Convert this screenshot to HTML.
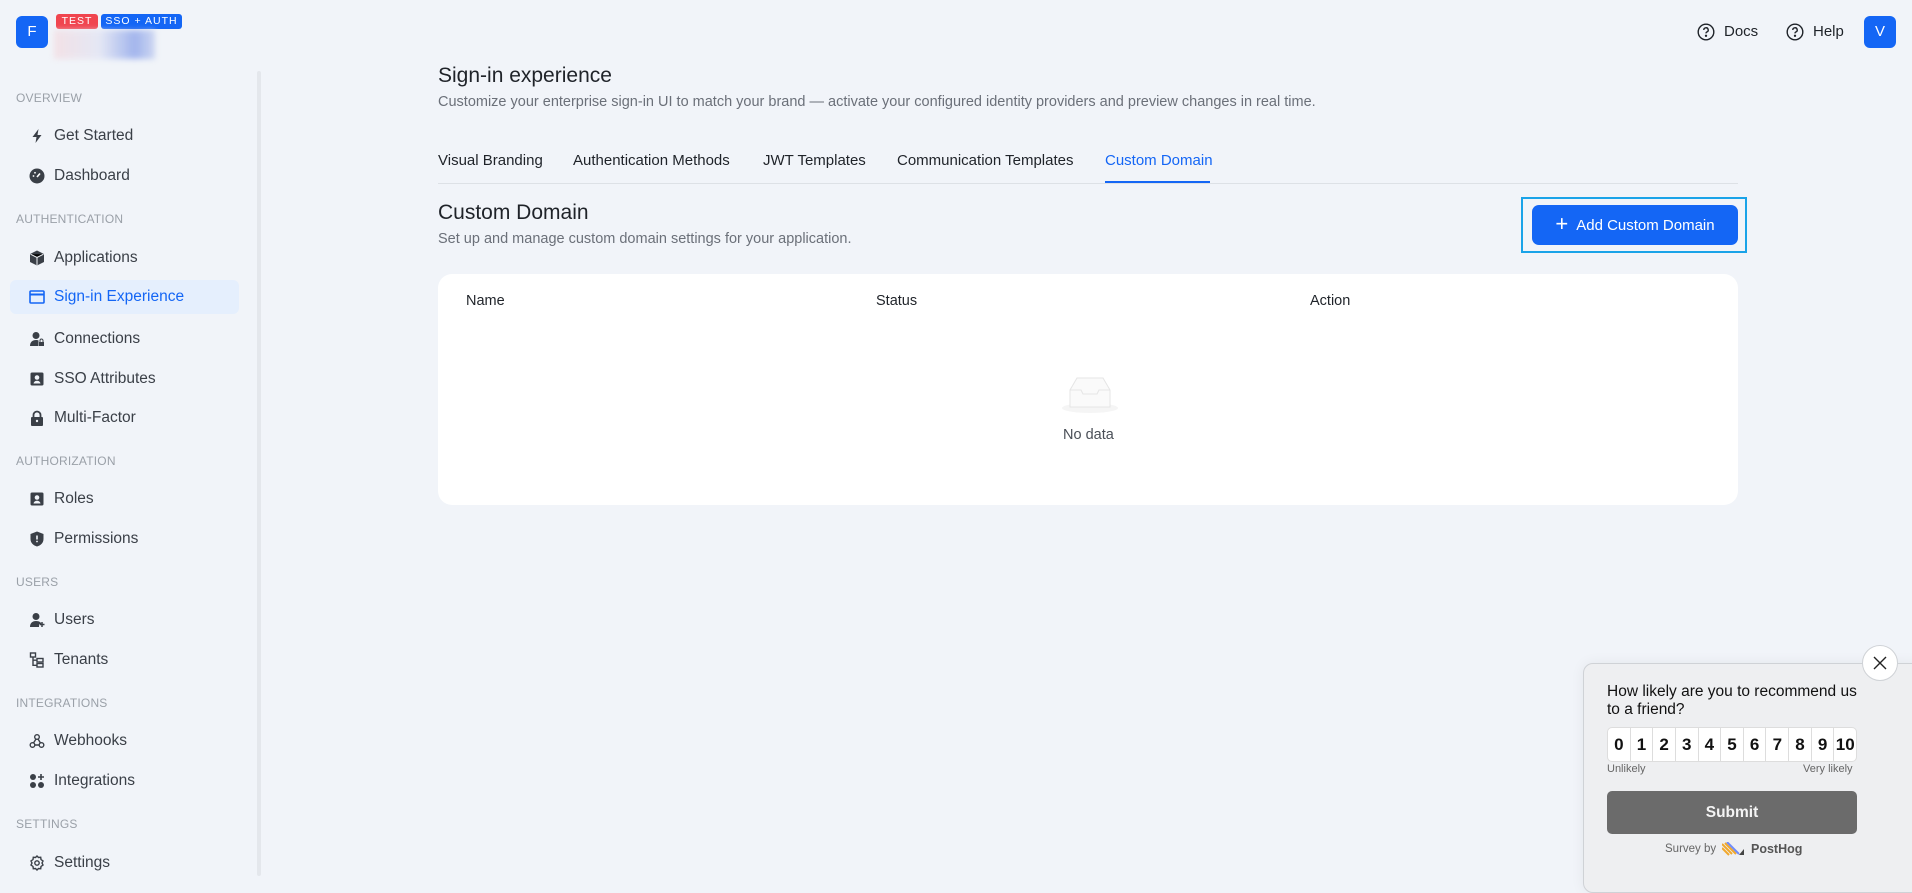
<!DOCTYPE html>
<html><head><meta charset="utf-8">
<style>
*{box-sizing:border-box;margin:0;padding:0}
body{width:1912px;height:876px;overflow:hidden;background:#f1f4f9;font-family:"Liberation Sans",sans-serif;color:#1f2329;position:relative}
.a{position:absolute;white-space:nowrap}
.sec{position:absolute;left:16px;font-size:12px;color:#9aa0a8;letter-spacing:.2px}
.it{position:absolute;left:10px;width:229px;height:34px;border-radius:6px;display:flex;align-items:center;font-size:15.5px;color:#3a3f47}
.it svg{position:absolute;left:19px;top:9px}
.it span{position:absolute;left:44px}
.tab{position:absolute;top:152px;font-size:15px;color:#1f2329}
.n{flex:1;border-right:1px solid #ddd;display:flex;align-items:center;justify-content:center;font-weight:bold;font-size:17px;color:#111}
</style></head><body>
<div class="a" style="left:16px;top:16px;width:32px;height:32px;background:#1466f5;border-radius:6px;color:#fff;font-size:15px;text-align:center;line-height:32px">F</div>
<div class="a" style="left:56px;top:14px;width:42px;height:15px;background:#f0454f;border-radius:3px;color:#fff;font-size:10.5px;letter-spacing:1px;text-align:center;line-height:15px">TEST</div>
<div class="a" style="left:101px;top:14px;width:81px;height:15px;background:#1466f5;border-radius:3px;color:#fff;font-size:10.5px;letter-spacing:1px;text-align:center;line-height:15px">SSO + AUTH</div>
<div class="a" style="left:54px;top:30px;width:101px;height:29px;background:linear-gradient(90deg,#f3dde2,#e2e5f4 45%,#8fa6ea 80%,#c5d0f0);filter:blur(3px);opacity:.8"></div>
<div class="a" style="left:257px;top:71px;width:4px;height:805px;background:#e4e7ec;border-radius:2px"></div>

<div class="sec" style="top:91px">OVERVIEW</div>
<div class="it" style="top:119px"><svg width="16" height="16" viewBox="0 0 16 16"><path d="M9.5 1 3.5 9h4l-1 6 6-8h-4z" fill="#3a3f47"/></svg><span>Get Started</span></div>
<div class="it" style="top:159px"><svg width="16" height="16" viewBox="0 0 16 16"><circle cx="8" cy="8" r="7.5" fill="#3a3f47"/><path d="M8 9 11 5.5" stroke="#fff" stroke-width="1.6"/><circle cx="4.5" cy="8" r=".9" fill="#fff"/><circle cx="6" cy="4.8" r=".9" fill="#fff"/></svg><span>Dashboard</span></div>
<div class="sec" style="top:212px">AUTHENTICATION</div>
<div class="it" style="top:241px"><svg width="16" height="16" viewBox="0 0 16 16"><path d="M8 .5 15 4v8l-7 3.5L1 12V4z" fill="#3a3f47"/><path d="M1.5 4.2 8 7.5l6.5-3.3M8 7.5v7.7" stroke="#f1f4f9" stroke-width="1"/></svg><span>Applications</span></div>
<div class="it" style="top:280px;background:#e5effd;color:#1466f5"><svg width="16" height="16" viewBox="0 0 16 16"><rect x="1" y="2" width="14" height="12" rx="1" fill="none" stroke="#1466f5" stroke-width="1.6"/><path d="M1 5.5h14" stroke="#1466f5" stroke-width="2"/></svg><span>Sign-in Experience</span></div>
<div class="it" style="top:322px"><svg width="16" height="16" viewBox="0 0 16 16"><circle cx="7" cy="4.5" r="3.5" fill="#3a3f47"/><path d="M1 15c0-4 2.5-6 6-6 1 0 2 .2 2.5.5V15z" fill="#3a3f47"/><rect x="10" y="11" width="5" height="4" fill="#3a3f47"/><path d="M11 11V9.5a1.5 1.5 0 0 1 3 0V11" stroke="#3a3f47" fill="none"/></svg><span>Connections</span></div>
<div class="it" style="top:362px"><svg width="16" height="16" viewBox="0 0 16 16"><rect x="1.5" y="1.5" width="13" height="13" rx="1.5" fill="#3a3f47"/><circle cx="8" cy="6.5" r="2.3" fill="#f1f4f9"/><path d="M4.5 12.5c.5-2 2-2.7 3.5-2.7s3 .7 3.5 2.7z" fill="#f1f4f9"/></svg><span>SSO Attributes</span></div>
<div class="it" style="top:401px"><svg width="16" height="16" viewBox="0 0 16 16"><rect x="2" y="7" width="12" height="9" rx="1" fill="#3a3f47"/><path d="M4.5 7V5a3.5 3.5 0 0 1 7 0v2" stroke="#3a3f47" stroke-width="1.8" fill="none"/><circle cx="8" cy="11" r="1.2" fill="#f1f4f9"/></svg><span>Multi-Factor</span></div>
<div class="sec" style="top:454px">AUTHORIZATION</div>
<div class="it" style="top:482px"><svg width="16" height="16" viewBox="0 0 16 16"><rect x="1.5" y="1.5" width="13" height="13" rx="1.5" fill="#3a3f47"/><circle cx="8" cy="6.5" r="2.3" fill="#f1f4f9"/><path d="M4.5 12.5c.5-2 2-2.7 3.5-2.7s3 .7 3.5 2.7z" fill="#f1f4f9"/></svg><span>Roles</span></div>
<div class="it" style="top:522px"><svg width="16" height="16" viewBox="0 0 16 16"><path d="M8 .5 14.5 3v5c0 4-3 6.5-6.5 7.5C4.5 14.5 1.5 12 1.5 8V3z" fill="#3a3f47"/><rect x="7.2" y="4.5" width="1.6" height="4" fill="#f1f4f9"/><circle cx="8" cy="10.5" r=".9" fill="#f1f4f9"/></svg><span>Permissions</span></div>
<div class="sec" style="top:575px">USERS</div>
<div class="it" style="top:603px"><svg width="16" height="16" viewBox="0 0 16 16"><circle cx="7" cy="4.5" r="3.5" fill="#3a3f47"/><path d="M1 15c0-4 2.5-6 6-6s5 1.5 5.5 3H10v3z" fill="#3a3f47"/><path d="M13 10v5M10.5 12.5h5" stroke="#3a3f47" stroke-width="1.5"/></svg><span>Users</span></div>
<div class="it" style="top:643px"><svg width="16" height="16" viewBox="0 0 16 16" fill="none" stroke="#3a3f47" stroke-width="1.4"><rect x="1.5" y="1" width="5" height="4"/><rect x="8" y="6.5" width="6" height="3.5"/><rect x="8" y="11.5" width="6" height="3.5"/><path d="M4 5v8.3h4M4 8.2h4"/></svg><span>Tenants</span></div>
<div class="sec" style="top:696px">INTEGRATIONS</div>
<div class="it" style="top:724px"><svg width="16" height="16" viewBox="0 0 16 16" fill="none" stroke="#3a3f47" stroke-width="1.4"><circle cx="8" cy="4" r="2.3"/><circle cx="3.5" cy="12" r="2.3"/><circle cx="12.5" cy="12" r="2.3"/><path d="M7 6 4.5 10M9 6l2.5 4M5.8 12h4.4"/></svg><span>Webhooks</span></div>
<div class="it" style="top:764px"><svg width="16" height="16" viewBox="0 0 16 16" fill="#3a3f47"><circle cx="4" cy="4" r="3"/><circle cx="4" cy="12" r="3"/><circle cx="12" cy="12" r="3"/><path d="M12 1v6M9 4h6" stroke="#3a3f47" stroke-width="1.6"/></svg><span>Integrations</span></div>
<div class="sec" style="top:817px">SETTINGS</div>
<div class="it" style="top:846px"><svg width="16" height="16" viewBox="0 0 16 16" fill="none" stroke="#3a3f47" stroke-width="1.4"><path d="M8 1 9.5 2.5 11.7 2.3 12 4.5 14 6l-1 2 1 2-2 1.5-.3 2.2-2.2-.2L8 15l-1.5-1.5-2.2.2L4 11.5 2 10l1-2-1-2 2-1.5.3-2.2 2.2.2z"/><circle cx="8" cy="8" r="2.2"/></svg><span>Settings</span></div>

<svg class="a" style="left:1697px;top:23px" width="18" height="18" viewBox="0 0 18 18" fill="none" stroke="#1f2329" stroke-width="1.4"><circle cx="9" cy="9" r="7.8"/><path d="M6.8 7a2.2 2.2 0 1 1 3 2c-.6.3-.8.7-.8 1.4"/><circle cx="9" cy="12.8" r=".5" fill="#1f2329"/></svg>
<div class="a" style="left:1724px;top:23px;font-size:15px">Docs</div>
<svg class="a" style="left:1786px;top:23px" width="18" height="18" viewBox="0 0 18 18" fill="none" stroke="#1f2329" stroke-width="1.4"><circle cx="9" cy="9" r="7.8"/><path d="M6.8 7a2.2 2.2 0 1 1 3 2c-.6.3-.8.7-.8 1.4"/><circle cx="9" cy="12.8" r=".5" fill="#1f2329"/></svg>
<div class="a" style="left:1813px;top:23px;font-size:15px">Help</div>
<div class="a" style="left:1864px;top:16px;width:32px;height:32px;background:#1466f5;border-radius:6px;color:#fff;font-size:15px;text-align:center;line-height:32px">V</div>

<div class="a" style="left:438px;top:64px;font-size:21px;color:#1f2329">Sign-in experience</div>
<div class="a" style="left:438px;top:94px;font-size:14.5px;color:#6b7079">Customize your enterprise sign-in UI to match your brand — activate your configured identity providers and preview changes in real time.</div>
<div class="tab" style="left:438px">Visual Branding</div>
<div class="tab" style="left:573px">Authentication Methods</div>
<div class="tab" style="left:763px">JWT Templates</div>
<div class="tab" style="left:897px">Communication Templates</div>
<div class="tab" style="left:1105px;color:#1466f5">Custom Domain</div>
<div class="a" style="left:438px;top:183px;width:1300px;height:1px;background:#dde1e6"></div>
<div class="a" style="left:1105px;top:181px;width:105px;height:2px;background:#1466f5"></div>

<div class="a" style="left:438px;top:201px;font-size:21px">Custom Domain</div>
<div class="a" style="left:438px;top:231px;font-size:14.5px;color:#6b7079">Set up and manage custom domain settings for your application.</div>
<div class="a" style="left:1521px;top:197px;width:226px;height:56px;border:2px solid #1aa3e8"></div>
<div class="a" style="left:1532px;top:205px;width:206px;height:40px;background:#1466f5;border-radius:7px;color:#fff;font-size:15px;display:flex;align-items:center;justify-content:center"><span style="font-size:22px;font-weight:300;margin-right:8px;margin-top:-3px">+</span>Add Custom Domain</div>

<div class="a" style="left:438px;top:274px;width:1300px;height:231px;background:#fff;border-radius:14px"></div>
<div class="a" style="left:466px;top:293px;font-size:14.5px">Name</div>
<div class="a" style="left:876px;top:293px;font-size:14.5px">Status</div>
<div class="a" style="left:1310px;top:293px;font-size:14.5px">Action</div>
<svg class="a" style="left:1060px;top:374px" width="60" height="40" viewBox="0 0 60 40"><ellipse cx="30" cy="34" rx="28" ry="5" fill="#f5f5f5"/><path d="M10 16 17 4h26l7 12v17H10z" fill="#fafafa" stroke="#e5e5e5"/><path d="M10 16h11l2 4h14l2-4h11" fill="none" stroke="#e5e5e5"/></svg>
<div class="a" style="left:1063px;top:427px;font-size:14.5px;color:#4a4f57">No data</div>

<div class="a" style="left:1583px;top:663px;width:340px;height:230px;background:#eeeff1;border:1px solid #cfd2d6;border-radius:10px;box-shadow:0 0 14px rgba(0,0,0,.06)"></div>
<div class="a" style="left:1862px;top:645px;width:36px;height:36px;border-radius:50%;background:#fff;border:1px solid #cfd2d6"></div>
<svg class="a" style="left:1872px;top:655px" width="16" height="16" viewBox="0 0 16 16" stroke="#222" stroke-width="1.4"><path d="M2 2l12 12M14 2 2 14"/></svg>
<div class="a" style="left:1607px;top:683px;font-size:15.5px;line-height:18px;color:#111;white-space:normal;width:250px">How likely are you to recommend us to a friend?</div>
<div class="a" style="left:1607px;top:727px;width:250px;height:35px;background:#fff;border:1px solid #ddd;border-radius:5px;display:flex;overflow:hidden">
<div class="n">0</div><div class="n">1</div><div class="n">2</div><div class="n">3</div><div class="n">4</div><div class="n">5</div><div class="n">6</div><div class="n">7</div><div class="n">8</div><div class="n">9</div><div class="n" style="border:0">10</div></div>
<div class="a" style="left:1607px;top:763px;font-size:11px;color:#666">Unlikely</div>
<div class="a" style="left:1803px;top:763px;font-size:11px;color:#666">Very likely</div>
<div class="a" style="left:1607px;top:791px;width:250px;height:43px;background:#6b6b6b;border-radius:5px;color:#f4f4f4;font-weight:bold;font-size:15.5px;text-align:center;line-height:43px">Submit</div>
<div class="a" style="left:1665px;top:843px;font-size:11.5px;color:#666">Survey by</div>
<svg class="a" style="left:1722px;top:842px" width="26" height="14" viewBox="0 0 26 14"><path d="M0 2l10 10M0 6l7 7M3 1l11 11" stroke="#f1a82c" stroke-width="2"/><path d="M5 0l12 12" stroke="#1d4aff" stroke-width="2" opacity=".6"/><path d="M17 13l5-6v6z" fill="#444"/></svg>
<div class="a" style="left:1751px;top:842px;font-size:12.5px;font-weight:bold;color:#555">PostHog</div>
</body></html>
